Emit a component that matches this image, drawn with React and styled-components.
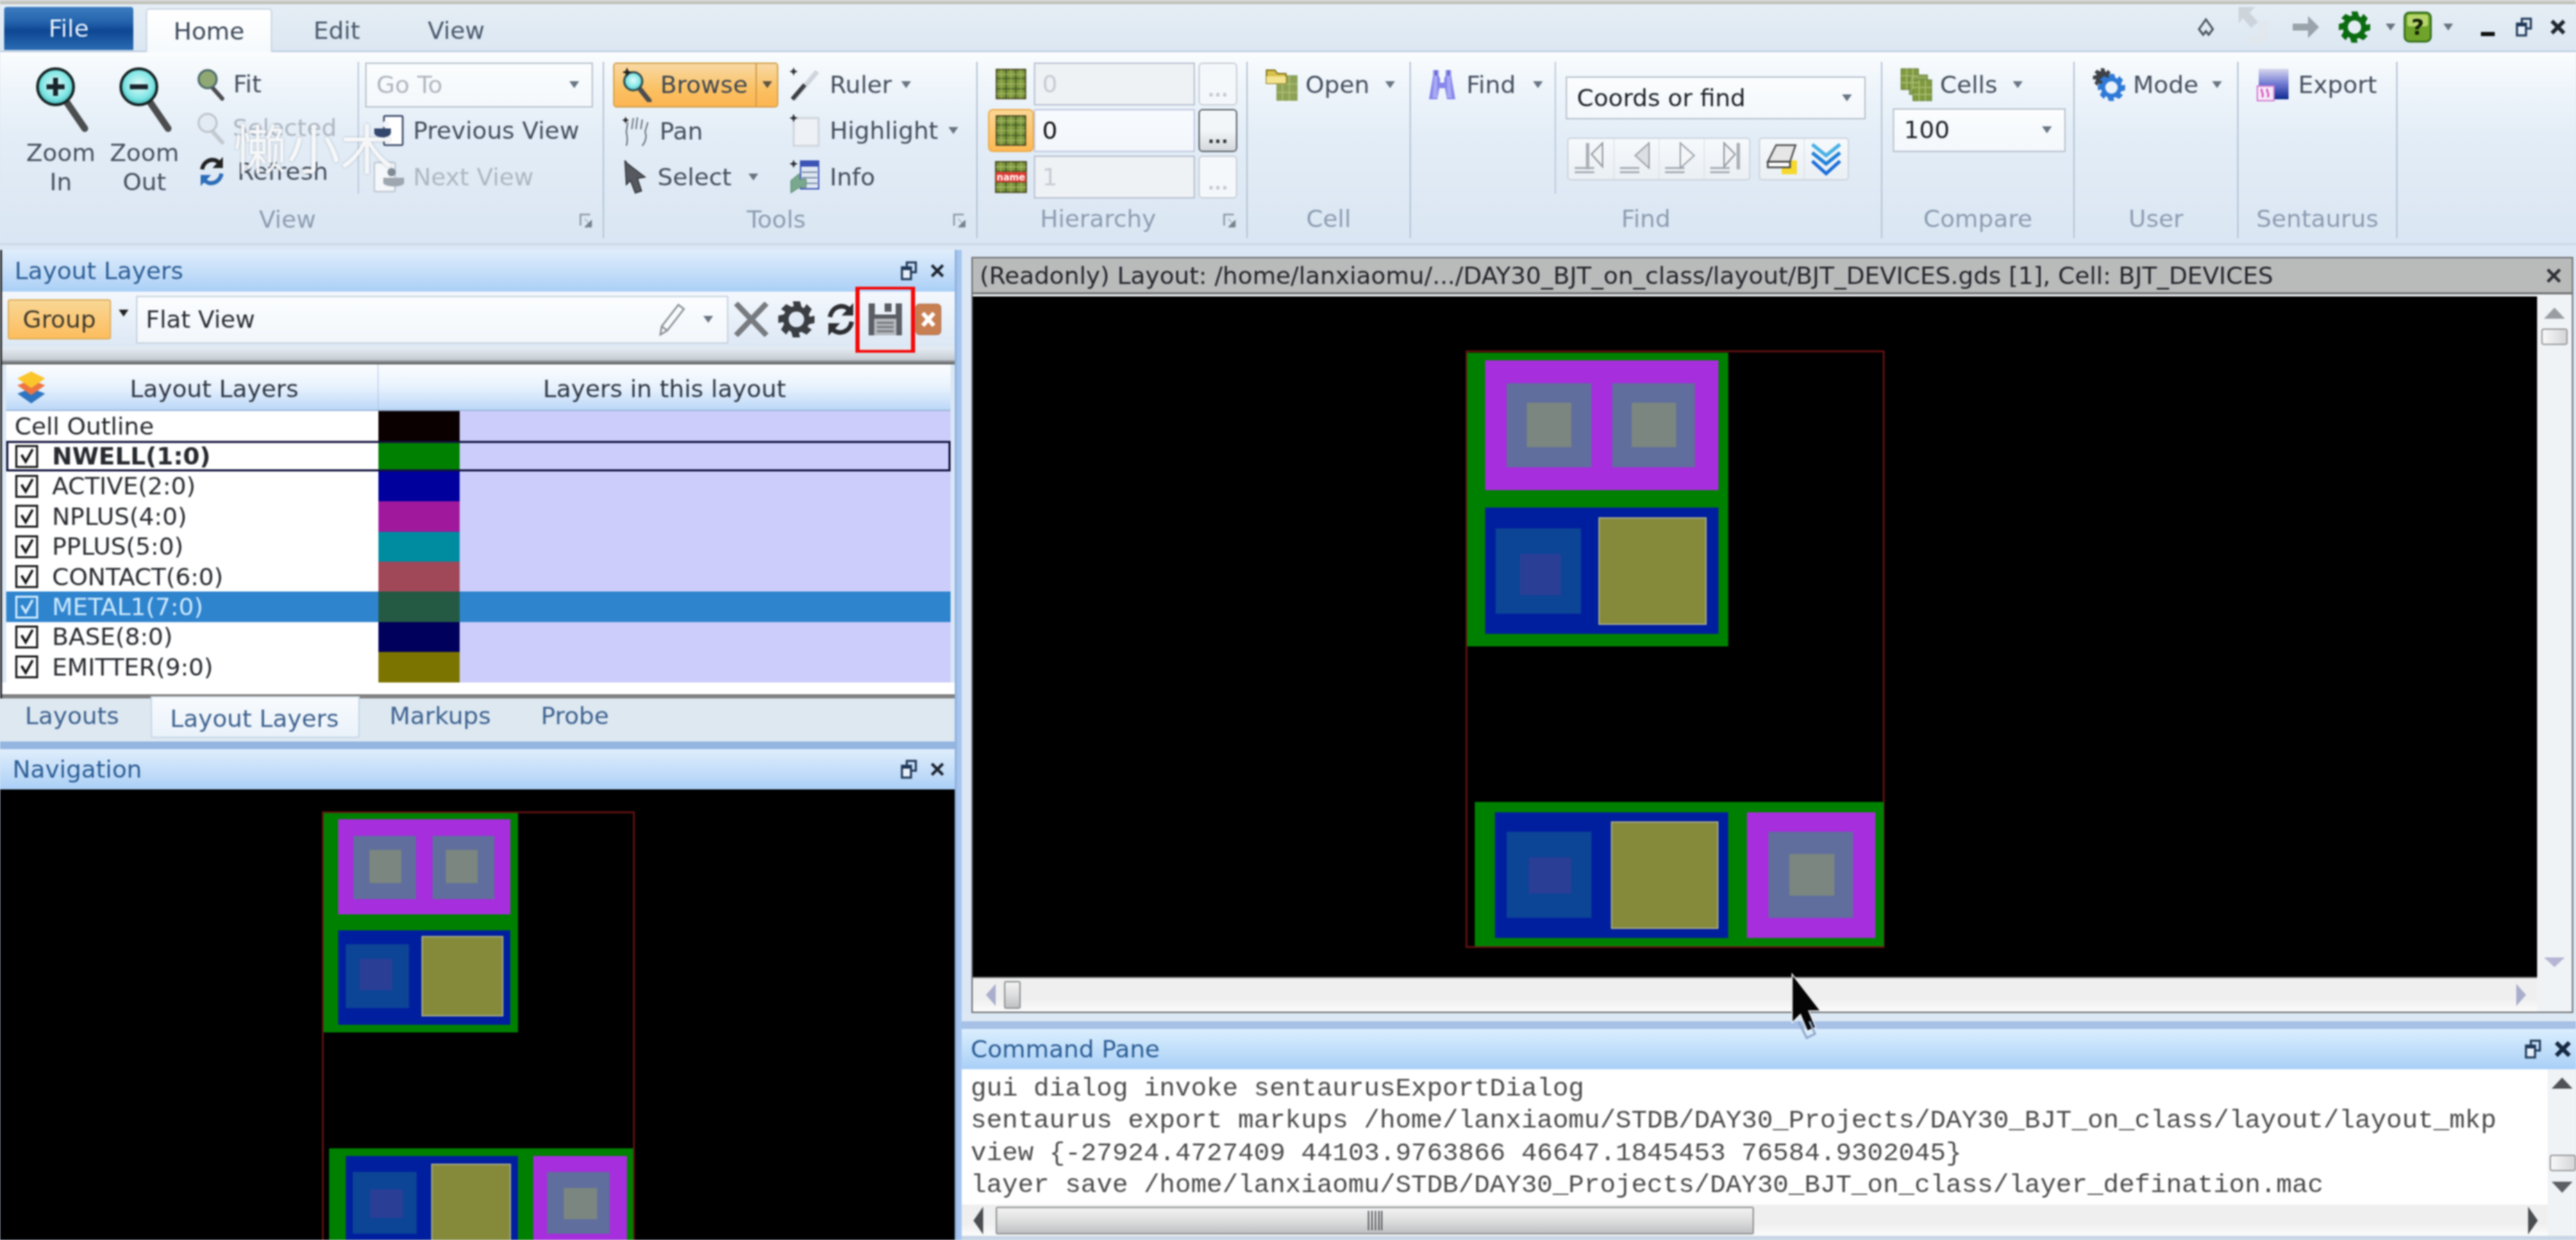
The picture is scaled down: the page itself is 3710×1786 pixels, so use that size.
import React from 'react';
import styled, { createGlobalStyle, css } from 'styled-components';

const Global = createGlobalStyle`
  html, body { margin: 0; padding: 0; background: #dbe7f4; }
  * { box-sizing: border-box; }
`;

const SANS = `"DejaVu Sans", "Liberation Sans", sans-serif`;

const Page = styled.div`
  position: relative;
  width: 3710px;
  height: 1786px;
  overflow: hidden;
  background: #dbe7f4;
  font-family: ${SANS};
  font-size: 34.6px;
  color: #3f4a59;
  filter: blur(0.8px);
  white-space: nowrap;
`;
const TopStrip = styled.div`height: 6px; background: linear-gradient(#d6d5cf, #b9bab6);`;
const TabRow = styled.div`
  height: 69px;
  display: flex;
  align-items: flex-start;
  padding-left: 6px;
  background: linear-gradient(#e6eef5, #dbe7f2);
  border-bottom: 2px solid #b8c9dc;
`;
const FileBtn = styled.div`
  width: 186px; height: 62px; margin-top: 4px;
  display: flex; align-items: center; justify-content: center;
  color: #e8f2fb;
  border-radius: 4px 4px 0 0;
  background: linear-gradient(#3d7cc0 0%, #2464ac 35%, #0e4692 55%, #2a6cb4 100%);
`;
const RibbonTab = styled.div`
  width: ${p => p.$w}px;
  height: 69px;
  display: flex; align-items: center; justify-content: center;
  color: #49586b;
  padding-top: 6px;
  ${p => p.$active && css`
    margin-left: 18px;
    margin-top: 6px;
    height: 63px;
    padding-top: 0;
    background: linear-gradient(#ffffff, #f6fafd);
    border: 2px solid #c8d6e4;
    border-bottom: none;
    border-radius: 5px 5px 0 0;
    color: #3c4858;
  `}
`;
const QuickBar = styled.div`
  margin-left: auto;
  height: 66px;
  display: grid;
  grid-template-columns: 54px 84px 66px 74px 30px 48px 40px 74px 30px 8px 52px;
  align-items: center;
  justify-items: center;
`;
const Ribbon = styled.div`
  height: 278px;
  display: flex;
  align-items: flex-start;
  padding-top: 14px;
  background: linear-gradient(#fbfdfe 0%, #f0f6fb 15%, #e3edf7 45%, #dae6f3 100%);
  border-bottom: 3px solid #cbd9e8;
`;
const Group = styled.div`
  position: relative;
  width: ${p => p.$w}px;
  height: 254px;
  display: flex;
  flex-direction: column;
  border-right: 2px solid #b4c3d4;
`;
const GroupBody = styled.div`
  height: 199px;
  display: flex;
  padding-left: ${p => p.$pad || 0}px;
`;
const GroupLabel = styled.div`
  height: 56px;
  line-height: 56px;
  text-align: center;
  color: #8c9cb0;
  padding-right: ${p => (p.$launcher ? 40 : 0)}px;
`;
const Launcher = styled.span`
  position: absolute;
  right: 14px;
  bottom: 14px;
  display: flex;
`;
const BigBtn = styled.div`
  width: ${p => p.$w}px;
  display: flex;
  flex-direction: column;
  align-items: center;
  padding-top: 6px;
  line-height: 42px;
  text-align: center;
  color: #454f5e;
`;
const BigIcon = styled.div`height: 104px; display: flex; justify-content: center; padding-left: 6px;`;
const Column = styled.div`
  width: ${p => p.$w}px;
  display: flex;
  flex-direction: column;
  margin-left: ${p => p.$ml || 0}px;
  ${p => p.$divider && css`
    height: 190px;
    border-right: 2px solid #bccadb;
  `}
`;
const Row = styled.div`
  height: 66.5px;
  display: flex;
  align-items: center;
  color: ${p => (p.$off ? '#aeb6c1' : '#434d5c')};
`;
const Slot = styled.span`
  width: ${p => p.$w}px;
  flex: none;
  display: flex;
  align-items: center;
  padding-left: ${p => p.$pl || 0}px;
`;
const Caret = styled.i`
  display: inline-block;
  flex: none;
  width: 0; height: 0;
  margin-left: ${p => p.$ml || 0}px;
  border-left: 7px solid transparent;
  border-right: 7px solid transparent;
  border-top: 10px solid ${p => p.$c || '#687482'};
`;
const ComboBox = styled.div`
  width: ${p => p.$w}px;
  height: ${p => p.$h}px;
  margin-top: ${p => p.$mt || 0}px;
  margin-left: ${p => p.$ml || 0}px;
  display: flex;
  align-items: center;
  justify-content: space-between;
  padding: 0 18px 0 ${p => p.$pl || 14}px;
  border: 2px solid #b9c2cd;
  background: linear-gradient(#fbfdfe, #f4f8fc);
  color: ${p => p.$c || '#1e2228'};
`;
const BrowseSplit = styled.div`
  height: 65px;
  width: 238px;
  margin-top: 1px;
  margin-bottom: 0.5px;
  display: flex;
  border-radius: 5px;
  border: 2px solid #d3a24e;
  background: linear-gradient(#f8d9a4, #fbc163 60%, #fdb552);
  color: #3e4650;
`;
const BrowseMain = styled.div`
  width: 205px;
  display: flex;
  align-items: center;
  padding-left: 12px;
  border-right: 2px solid #d39c49;
`;
const BrowseDrop = styled.div`flex: 1; display: flex; align-items: center; justify-content: center;`;
const HierRows = styled.div`
  display: flex;
  flex-direction: column;
  gap: 5px;
  margin-top: 1px;
`;
const HierRow = styled.div`
  display: grid;
  grid-template-columns: 66px 232px 56px;
  column-gap: 0;
  height: 62px;
`;
const HierIcon = styled.div`
  display: flex; align-items: center; justify-content: center;
  border-radius: 7px;
  ${p => p.$active && css`
    background: linear-gradient(#fbd793, #fdb954);
    border: 2px solid #e9ab4c;
  `}
`;
const HierInput = styled.div`
  display: flex; align-items: center;
  padding-left: 10px;
  border: 2px solid ${p => (p.$active ? '#c3c8e0' : '#b9c1d2')};
  background: ${p => (p.$active ? 'linear-gradient(#f8fbfe,#f3f6fb)' : '#eff2f4')};
  color: ${p => (p.$active ? '#111' : '#c6ccd4')};
`;
const DotsBtn = styled.div`
  margin-left: 5px;
  width: 56px;
  display: flex; align-items: flex-end; justify-content: center;
  border-radius: 6px;
  font-size: 26px;
  font-weight: bold;
  line-height: 28px;
  padding-bottom: 6px;
  border: 2px solid ${p => (p.$active ? '#585f68' : '#c9cfd7')};
  background: ${p => (p.$active ? 'linear-gradient(#f3f6f9 50%,#d4d8dc)' : '#f5f8fb')};
  color: ${p => (p.$active ? '#333' : '#c4cad2')};
`;
const ToolStrip = styled.div`
  margin-top: 26px;
  margin-left: 2px;
  display: flex;
  gap: 12px;
`;
const ToolSet = styled.div`
  display: flex;
  height: 62px;
  border: 2px solid #ccd4de;
  border-radius: 5px;
  background: linear-gradient(#f7fafc, #eaeff4);
`;
const ToolCell = styled.div`
  width: ${p => p.$w}px;
  display: flex; align-items: center; justify-content: center;
  & + & { border-left: 1px solid #d5dce4; }
`;
const Dock = styled.div`
  height: 1433px;
  display: flex;
  padding-top: 7px;
`;
const LeftCol = styled.div`
  width: 1378px;
  flex: none;
  display: flex;
  flex-direction: column;
  border-right: 3px solid #8fb3df;
`;
const LayersPanel = styled.div`
  display: flex;
  flex-direction: column;
  flex: none;
  border-left: 3px solid #2a2a2a;
`;
const DockTitle = styled.div`
  height: ${p => p.$h || 60}px;
  flex: none;
  display: flex;
  align-items: center;
  justify-content: space-between;
  padding: 0 ${p => p.$pr || 14}px 0 ${p => p.$pl || 18}px;
  background: linear-gradient(#dfeefc, #bcd9f8 70%, #a9cff7);
  color: #2c5d94;
`;
const TitleControls = styled.div`
  display: flex;
  gap: 18px;
  align-items: center;
`;
const LayerToolbar = styled.div`
  height: 80px;
  flex: none;
  display: flex;
  align-items: center;
  background: linear-gradient(#f4f8fd, #dce8f5);
`;
const GroupToggle = styled.div`
  width: 149px; height: 58px; margin-left: 8px;
  display: flex; align-items: center; justify-content: center;
  border: 2px solid #deb061;
  border-radius: 4px;
  background: linear-gradient(#f9d795, #fdbd5e);
  color: #3f3a2b;
`;
const GroupCaretCell = styled.div`
  width: 36px;
  display: flex;
  justify-content: center;
  margin-top: -18px;
`;
const ViewCombo = styled.div`
  width: 853px; height: 69px;
  display: flex; align-items: center;
  padding: 0 20px 0 12px;
  border: 2px solid #c8d2de;
  background: linear-gradient(#fbfdff, #f3f7fb);
  color: #2a2d33;
`;
const ViewComboText = styled.span`flex: 1;`;
const ToolIcon = styled.div`
  position: relative;
  width: ${p => p.$w}px;
  height: 80px;
  display: flex; align-items: center; justify-content: center;
`;
const RedBox = styled.div`
  position: absolute;
  left: -10px; top: -7px;
  width: 86px; height: 95px;
  border-style: solid;
  border-color: #f40808;
  border-width: 4px 6px;
`;
const GrayBand = styled.div`
  height: 25px; flex: none;
  background: linear-gradient(#e6edf4, #c8ced4 70%, #6c6f72 90%);
`;
const LayerTable = styled.div`
  margin-left: 6px;
  width: 1360px;
  flex: none;
  display: flex;
  flex-direction: column;
  background: #fff;
`;
const TableHead = styled.div`
  height: 67px;
  flex: none;
  display: grid;
  grid-template-columns: 536px 1fr;
  color: #2e3644;
  background: linear-gradient(#fcfeff, #e8f2fd 50%, #bcd8f8);
  border-bottom: 2px solid #9cb6d8;
`;
const HeadCell = styled.div`
  position: relative;
  display: flex; align-items: center; justify-content: center;
  padding-top: 4px;
  ${p => p.$first && css`border-right: 1px solid #a8c2e4; padding-left: 64px;`}
`;
const HeadLogo = styled.span`
  position: absolute; left: 14px; top: 10px; display: flex;
`;
const LayerRow = styled.div`
  position: relative;
  height: 43.4px;
  flex: none;
  display: grid;
  grid-template-columns: 536px 117px 1fr;
  color: ${p => (p.$sel ? '#cdeafe' : '#26292e')};
  font-weight: ${p => (p.$bold ? 700 : 400)};
`;
const LayerName = styled.div`
  display: flex; align-items: center;
  gap: 20px;
  padding-left: ${p => (p.$plain ? 12 : 13)}px;
  background: ${p => (p.$sel ? '#2f84ce' : '#fff')};
`;
const CheckBox = styled.span`
  flex: none;
  width: 33px; height: 33px;
  display: flex; align-items: center; justify-content: center;
  border: 3px solid ${p => (p.$sel ? '#cdeafe' : '#1c1c1c')};
  background: ${p => (p.$sel ? '#2f84ce' : '#fff')};
`;
const Swatch = styled.div`background: ${p => p.$c};`;
const LayerFill = styled.div`background: ${p => (p.$sel ? '#2f84ce' : '#cccdfb')};`;
const RowFrame = styled.div`
  position: absolute;
  inset: 0;
  border: 3px solid #12123e;
  pointer-events: none;
`;
const TableFoot = styled.div`
  height: 23px;
  flex: none;
  background: linear-gradient(#fff 70%, #fff 72%, #7a7a7a 76%, #8a8a8a);
`;
const PaneTabs = styled.div`
  height: 62px;
  flex: none;
  display: flex;
  align-items: flex-start;
  background: #dde8f1;
  color: #3e628f;
`;
const PaneTab = styled.div`
  width: ${p => p.$w}px;
  height: 50px;
  padding-left: ${p => p.$pl}px;
  line-height: 50px;
  ${p => p.$active && css`
    height: 60px;
    line-height: 60px;
    margin-top: -3px;
    background: linear-gradient(#f8fbfe, #eaf2fa);
    border: 2px solid #c7d6e6;
    border-top-color: #dfe8f1;
    border-radius: 0 0 4px 4px;
  `}
`;
const BlueBar = styled.div`height: 11px; flex: none; background: ${p => p.$c || '#94b5e0'};`;
const NavCanvas = styled.div`
  flex: 1;
  min-height: 0;
  background: #000;
  display: flex;
`;
const RightCol = styled.div`
  flex: 1;
  min-width: 0;
  display: flex;
  flex-direction: column;
  border-left: 7px solid #a5c5ee;
`;
const ViewFrame = styled.div`
  margin: 10px 4px 0 14px;
  height: 1089px;
  flex: none;
  display: flex;
  flex-direction: column;
  border: 2px solid #6d6f72;
  background: #f1f4f7;
`;
const FrameTitle = styled.div`
  height: 52px;
  flex: none;
  display: flex;
  align-items: center;
  justify-content: space-between;
  padding: 0 14px 0 10px;
  background: #b9baba;
  border-bottom: 3px solid #727476;
  color: #22262b;
`;
const FrameBody = styled.div`
  display: grid;
  grid-template-columns: 1fr 50px;
  flex: 1;
  min-height: 0;
  padding-top: 3px;
  background: #eef2f5;
`;
const CanvasBox = styled.div`background: #000; display: flex; border-bottom: 2px solid #888;`;
const VScroll = styled.div`
  display: flex;
  flex-direction: column;
  align-items: center;
  background: #f0f3f6;
  padding-top: ${p => p.$pt || 0}px;
  padding-bottom: ${p => p.$pb || 0}px;
`;
const VThumb = styled.div`
  width: ${p => p.$w || 38}px;
  height: ${p => p.$h || 24}px;
  margin-top: ${p => p.$mt || 0}px;
  margin-left: ${p => p.$ml || 0}px;
  margin-bottom: ${p => p.$mb || 0}px;
  flex: none;
  border: 2px solid #9a9c9e;
  border-radius: 4px;
  background: linear-gradient(90deg, #f8f8f8, #d4d6d8);
`;
const Spacer = styled.div`flex: 1;`;
const HScroll = styled.div`
  height: ${p => p.$h}px;
  display: flex;
  align-items: center;
  padding: 0 ${p => p.$pr}px 0 ${p => p.$pl}px;
  background: linear-gradient(#efefef 60%, #fbfbfb);
`;
const HThumb = styled.div`
  width: ${p => p.$w}px;
  height: ${p => p.$h}px;
  margin-left: ${p => p.$ml}px;
  display: flex; align-items: center; justify-content: center;
  border: 2px solid #8f9193;
  border-radius: 3px;
  background: linear-gradient(#f2f2f2, #e0e0e0 45%, #bfc1c3);
`;
const GapBand = styled.div`height: 12px; flex: none; background: #dce8f4;`;
const CommandTitle = styled(DockTitle)`
  background: linear-gradient(#dbeffe, #b8d9f9 70%, #a9cff8);
  color: #2c5d94;
`;
const CommandBody = styled.div`
  display: grid;
  grid-template-columns: 1fr 41px;
  flex: none;
  height: 240px;
  background: #fff;
`;
const CommandText = styled.pre`
  margin: 0;
  height: 195px;
  padding: 5px 0 0 13px;
  font-family: "Liberation Mono", "DejaVu Sans Mono", monospace;
  font-size: 37.75px;
  line-height: 46.3px;
  color: #4a4a4a;
  overflow: hidden;
`;
const CommandLeft = styled.div`display: flex; flex-direction: column; min-width: 0;`;
const BottomEdge = styled.div`height: 6px; flex: none; background: #c9d6e6;`;
const Watermark = styled.div`
  position: absolute;
  left: 336px; top: 166px;
  font-family: "Noto Sans CJK SC", sans-serif;
  font-weight: 400;
  font-size: 77px;
  line-height: 90px;
  color: rgba(255,255,255,0.9);
  text-shadow: 0 0 3px rgba(100,110,125,0.55);
  pointer-events: none;
`;
const Cursor = styled.svg`
  position: absolute;
  left: 2576px; top: 1401px;
  pointer-events: none;
`;

/* ---------- icons ---------- */
const gearPath = (cx, cy, ro, ri, n) => {
  const pts = [];
  for (let i = 0; i < n; i++) {
    const a = (i / n) * Math.PI * 2;
    const d = (Math.PI / n) * 0.5;
    [[a - d, ro], [a + d, ro], [a + d * 2, ri], [a + d * 3 , ri]].forEach(([t, r]) => {
      pts.push(`${(cx + Math.cos(t) * r).toFixed(1)} ${(cy + Math.sin(t) * r).toFixed(1)}`);
    });
  }
  return `M${pts.join('L')}Z`;
};
const Gear = ({ w, h, c, hole = 'transparent', holeR, r = 20, ri = 15, stroke }) => (
  <svg width={w} height={h} viewBox="0 0 48 48">
    <path d={gearPath(24, 24, r, ri, 8)} fill={c} />
    <circle cx="24" cy="24" r={holeR || r * 0.42} fill={hole} stroke={stroke} />
  </svg>
);
const GlassDefs = () => (
  <defs>
    <radialGradient id="glass" cx="50%" cy="45%" r="55%">
      <stop offset="0" stopColor="#e4fbfb" />
      <stop offset="0.7" stopColor="#7fe6e4" />
      <stop offset="1" stopColor="#3fb4b6" />
    </radialGradient>
  </defs>
);
const ZoomIcon = ({ sign }) => (
  <svg width="78" height="96" viewBox="0 0 78 96">
    <GlassDefs />
    <line x1="44" y1="52" x2="70" y2="90" stroke="#4b4d4e" strokeWidth="10" strokeLinecap="round" />
    <circle cx="28" cy="30" r="26" fill="url(#glass)" stroke="#172424" strokeWidth="4" />
    <rect x="15" y="26.5" width="26" height="7" fill="#18242a" />
    {sign === '+' && <rect x="24.5" y="17" width="7" height="26" fill="#18242a" />}
  </svg>
);
const SmallGlass = ({ fill = '#90a874', off }) => (
  <svg width="42" height="50" viewBox="0 0 42 50" opacity={off ? 0.35 : 1}>
    <line x1="20" y1="28" x2="36" y2="46" stroke={off ? '#888' : '#4a4c50'} strokeWidth="6" strokeLinecap="round" />
    <circle cx="15" cy="18" r="13" fill={fill} stroke={off ? '#777' : '#4d6a6c'} strokeWidth="3" />
  </svg>
);
const RefreshIcon = ({ size = 36, h = 50, c1 = '#2c6cb8', c2 = '#222' }) => (
  <svg width={size} height={h} viewBox="0 0 36 50">
    <path d="M4 22 A15 17 0 0 1 30 14" fill="none" stroke={c2} strokeWidth="6" />
    <path d="M34 4v16H19z" fill={c2} />
    <path d="M32 28 A15 17 0 0 1 6 36" fill="none" stroke={c1} strokeWidth="6" />
    <path d="M2 46V30h15z" fill={c1} />
  </svg>
);
const PrevViewIcon = () => (
  <svg width="44" height="46" viewBox="0 0 44 46">
    <rect x="15" y="2" width="27" height="42" rx="2" fill="#fff" stroke="#3b4a6a" strokeWidth="2.5" />
    <path d="M1 20h24v6c0 9-24 9-24 0z" fill="#34486e" />
    <circle cx="18" cy="14" r="5" fill="#f2f6fa" />
  </svg>
);
const NextViewIcon = () => (
  <svg width="46" height="46" viewBox="0 0 46 46">
    <rect x="1" y="2" width="30" height="42" rx="2" fill="#f5f8fb" stroke="#c2cad4" strokeWidth="2.5" />
    <path d="M14 24h30v8c-3 6-26 6-30 0z" fill="#9ea7b0" />
    <circle cx="26" cy="16" r="6" fill="#7f8a94" />
  </svg>
);
const BrowseGlass = () => (
  <svg width="42" height="50" viewBox="0 0 42 50">
    <GlassDefs />
    <line x1="22" y1="28" x2="38" y2="48" stroke="#4a4c50" strokeWidth="7" strokeLinecap="round" />
    <circle cx="15" cy="20" r="13" fill="url(#glass)" stroke="#304c50" strokeWidth="3" />
    <path d="M6 0l2 5 5 2-5 2-2 5-2-5-5-2 5-2z" fill="#222" />
  </svg>
);
const PanIcon = () => (
  <svg width="42" height="46" viewBox="0 0 42 46" fill="none" stroke="#66707c" strokeWidth="2">
    <path d="M6 44c3-8 1-14 0-20l2-14M14 20l2-16M20 20l2-17M27 20l2-14M33 24l4-14M33 24c3 6 1 14-4 20" />
    <path d="M5 2l1.600 3.500 3.400 1.500-3.400 1.500-1.600 3.500-1.600-3.500-3.400-1.500 3.400-1.500z" fill="#222" stroke="none" />
  </svg>
);
const SelectIcon = () => (
  <svg width="38" height="48" viewBox="0 0 38 48">
    <path d="M4 0l3 4 26 20-11 2 6 18-9 3-7-18-6 6z" fill="#565a60" stroke="#2b2d30" strokeWidth="1.500" />
  </svg>
);
const Star = () => <path d="M6 0l1.800 4.200 4.200 1.800-4.200 1.800-1.800 4.200-1.800-4.200-4.200-1.800 4.200-1.800z" fill="#2c2e33" />;
const RulerIcon = () => (
  <svg width="44" height="50" viewBox="0 0 44 50">
    <line x1="6" y1="46" x2="40" y2="6" stroke="#cfd5dc" strokeWidth="7" />
    <line x1="4" y1="46" x2="22" y2="25" stroke="#3c3e42" strokeWidth="6" />
    <Star />
  </svg>
);
const HighlightIcon = () => (
  <svg width="44" height="48" viewBox="0 0 44 48">
    <rect x="6" y="6" width="36" height="40" fill="#eef2f6" stroke="#d0d6dd" strokeWidth="3" />
    <Star />
  </svg>
);
const InfoIcon = () => (
  <svg width="44" height="50" viewBox="0 0 44 50">
    <rect x="16" y="2" width="26" height="40" fill="#dfe7f2" stroke="#3c54b6" strokeWidth="2" />
    <rect x="16" y="2" width="26" height="8" fill="#3c54b6" />
    <path d="M18 18h22M18 26h22M18 34h22" stroke="#7a8ea8" strokeWidth="2" />
    <path d="M2 48V30l12-10v8h10v12H14z" fill="#7aa88e" stroke="#4d8068" />
    <Star />
  </svg>
);
const Mesh = ({ h = 42 }) => (
  <>
    <rect x="1" y="1" width="42" height={h} fill="#7f9a3e" stroke="#4f4f24" strokeWidth="2.500" />
    <path d={`M15 1v${h}M29 1v${h}M1 14h42M1 29h42`} stroke="#3e5526" strokeWidth="1.600" />
    <path d={`M8 1v${h}M22 1v${h}M36 1v${h}M1 8h42M1 22h42M1 36h42`} stroke="#b1bf72" strokeWidth="1" />
  </>
);
const GridIcon = () => <svg width="44" height="44" viewBox="0 0 44 44"><Mesh /></svg>;
const GridNameIcon = () => (
  <svg width="46" height="46" viewBox="0 0 44 44">
    <Mesh />
    <rect x="1" y="15" width="42" height="14" fill="#dd3a34" />
    <text x="22" y="27" textAnchor="middle" fontSize="14" fontWeight="700" fill="#fff" fontFamily="DejaVu Sans Condensed, DejaVu Sans">name</text>
  </svg>
);
const OpenIcon = () => (
  <svg width="46" height="46" viewBox="0 0 46 46">
    <rect x="16" y="10" width="29" height="36" fill="#8ea255" stroke="#71913a" />
    <path d="M24 10v36M34 10v36M16 22h29M16 34h29" stroke="#b2c17a" strokeWidth="1.500" />
    <path d="M1 2h12l4 5h12v14H1z" fill="#d7c14e" stroke="#837218" strokeWidth="2" />
    <path d="M1 11h28v10H1z" fill="#f5e48f" />
  </svg>
);
const BinocularsIcon = () => (
  <svg width="40" height="46" viewBox="0 0 40 46">
    <path d="M7 2h8v8l2 4v6h6v-6l2-4V2h8v8l6 34H27l-3-16h-8l-3 16H1l6-34z" fill="#8686ec" />
    <path d="M9 2h4v40H6zM27 2h4l3 40h-7z" fill="#a8a8f4" />
    <path d="M10 2h2v8h-2zM28 2h2v8h-2z" fill="#4848b4" />
  </svg>
);
const NavIcon = ({ kind }) => (
  <svg width="56" height="54" viewBox="0 0 56 54">
    <path d="M4 40h28M4 46h28" stroke="#9ca4ac" strokeWidth="2.500" />
    {kind === 'first' && <><rect x="20" y="4" width="5" height="38" fill="#aab0b7" /><path d="M44 4v34L28 20z" fill="#f1f3f5" stroke="#8f969e" strokeWidth="2" /></>}
    {kind === 'prev' && <path d="M46 4v36L26 22z" fill="#dce0e4" stroke="#9aa1a8" strokeWidth="2" />}
    {kind === 'next' && <path d="M26 4v36l20-18z" fill="#f5f6f7" stroke="#9aa1a8" strokeWidth="2" />}
    {kind === 'last' && <><path d="M24 4v34l16-18z" fill="#f1f3f5" stroke="#8f969e" strokeWidth="2" /><rect x="42" y="4" width="5" height="38" fill="#aab0b7" /></>}
  </svg>
);
const EraserIcon = () => (
  <svg width="46" height="48" viewBox="0 0 46 48">
    <rect x="22" y="26" width="22" height="20" fill="#f6d92c" />
    <path d="M14 4h28l-8 24H2z" fill="#e6e6e6" stroke="#555" strokeWidth="2.500" />
    <path d="M2 28h32v8H2z" fill="#fff" stroke="#444" strokeWidth="2.500" />
  </svg>
);
const ChevronsIcon = () => (
  <svg width="46" height="50" viewBox="0 0 46 50" fill="none" strokeWidth="5">
    <path d="M3 4l20 16L43 4" stroke="#4ab0e4" />
    <path d="M3 16l20 16 20-16" stroke="#2080d8" />
    <path d="M3 28l20 18 20-18" stroke="#1c6ed8" />
  </svg>
);
const CellsIcon = () => (
  <svg width="46" height="48" viewBox="0 0 46 48">
    <rect x="1" y="1" width="25" height="30" fill="#7f9a3e" stroke="#5c7030" />
    <rect x="13" y="10" width="26" height="28" fill="#8da555" stroke="#5c7030" />
    <rect x="18" y="17" width="27" height="30" fill="#7f9a3e" stroke="#5a7a38" />
    <path d="M9 1v30M18 1v30M1 11h25M1 21h25M27 17v30M36 17v30M18 28h27M18 38h27" stroke="#b2c17a" strokeWidth="1.500" />
  </svg>
);
const ModeIcon = () => (
  <svg width="48" height="48" viewBox="0 0 48 48">
    <path d={gearPath(15, 14, 14, 10, 8)} fill="#3e4248" />
    <path d={gearPath(28, 28, 20, 15, 8)} fill="#2f7ad8" />
    <circle cx="28" cy="28" r="9" fill="#eaf2fb" />
  </svg>
);
const ExportIcon = () => (
  <svg width="46" height="48" viewBox="0 0 46 48">
    <defs>
      <linearGradient id="exp" x1="0" y1="0" x2="0" y2="1">
        <stop offset="0" stopColor="#d9d9ee" />
        <stop offset="0.5" stopColor="#6f78d2" />
        <stop offset="1" stopColor="#0e2a90" />
      </linearGradient>
    </defs>
    <rect x="3" y="1" width="43" height="44" fill="url(#exp)" />
    <rect x="1" y="26" width="24" height="21" fill="#f4eaf6" stroke="#d67bd6" strokeWidth="2" />
    <path d="M8 30c-4 3 4 6 0 12M16 30c-4 3 4 6 0 12" stroke="#d64bc0" strokeWidth="2.500" fill="none" />
  </svg>
);
const LauncherIcon = () => (
  <svg width="20" height="22" viewBox="0 0 20 22">
    <path d="M2 18V2h14" fill="none" stroke="#909aa6" strokeWidth="2.500" />
    <path d="M8 8l9 10M18 10v10H8z" fill="#77818e" stroke="#77818e" strokeWidth="1" />
  </svg>
);
const FloatIcon = () => (
  <svg width="24" height="28" viewBox="0 0 24 28" fill="none" stroke="#1f3858" strokeWidth="3">
    <rect x="9" y="2" width="13" height="14" />
    <rect x="2" y="9" width="13" height="17" fill="#e8f0fa" />
    <path d="M2 11h13" strokeWidth="4" />
  </svg>
);
const CloseX = ({ c = '#1d2530', s = 22, w = 4 }) => (
  <svg width={s} height={s} viewBox="0 0 22 22">
    <path d="M3 3l16 16M19 3L3 19" stroke={c} strokeWidth={w} />
  </svg>
);
const QuickUp = () => (
  <svg width="28" height="30" viewBox="0 0 28 30" fill="none" stroke="#4c5660" strokeWidth="3">
    <path d="M4 18L14 4l10 14-6 8-4-5-4 5z" />
  </svg>
);
const BackFaint = () => (
  <svg width="48" height="66" viewBox="0 0 48 66" fill="#c6ccd2" opacity="0.75">
    <path d="M2 4h24L18 12l12 14-10 8L8 20l-6 8z" />
    <path d="M44 24v24L26 60 16 50l14-8V24z" fill="#e3e8ec" />
  </svg>
);
const ForwardFaint = () => (
  <svg width="42" height="38" viewBox="0 0 42 38">
    <path d="M2 14h22V3l16 16-16 16V24H2z" fill="#9aa2aa" />
  </svg>
);
const HelpIcon = () => (
  <svg width="42" height="46" viewBox="0 0 42 46">
    <rect x="2" y="2" width="38" height="42" rx="7" fill="#6fa32a" stroke="#2f6a1a" strokeWidth="2.500" />
    <rect x="6" y="5" width="30" height="17" rx="4" fill="#b6d66c" />
    <text x="21" y="34" textAnchor="middle" fontSize="32" fontWeight="700" fill="#152008" fontFamily="DejaVu Sans">?</text>
  </svg>
);
const MinimizeIcon = () => <svg width="22" height="34" viewBox="0 0 22 34"><rect x="1" y="24" width="20" height="6" fill="#111" /></svg>;
const PencilIcon = () => (
  <svg width="46" height="48" viewBox="0 0 46 48" fill="none" stroke="#8c9196" strokeWidth="2.500">
    <path d="M8 34L32 3l8 6-24 31-10 6z" fill="#f8fafc" />
    <path d="M8 34l8 6" />
  </svg>
);
const BigX = () => (
  <svg width="52" height="50" viewBox="0 0 52 50"><path d="M4 2l44 46M48 2L4 48" stroke="#777b7f" strokeWidth="8" /></svg>
);
const SaveIcon = () => (
  <svg width="54" height="52" viewBox="0 0 54 52">
    <path d="M3 3h9v16h30V3h9v46H3z" fill="#5b5f65" />
    <rect x="11" y="25" width="32" height="24" fill="#b6babf" />
    <path d="M15 31h24M15 37h24M15 43h24" stroke="#777b80" strokeWidth="3" />
    <rect x="26" y="3" width="10" height="12" fill="#5b5f65" />
  </svg>
);
const OrangeClose = () => (
  <svg width="38" height="46" viewBox="0 0 38 46">
    <rect x="1" y="1" width="36" height="44" rx="5" fill="#c87f52" stroke="#a86238" />
    <path d="M11 14l16 18M27 14L11 32" stroke="#fff" strokeWidth="6" />
  </svg>
);
const LayersLogo = () => (
  <svg width="44" height="46" viewBox="0 0 44 46">
    <path d="M22 24l20 8-20 14L2 32z" fill="#2f74c0" />
    <path d="M22 12l20 8-20 14L2 20z" fill="#ee7440" />
    <path d="M22 0l20 10-20 14L2 10z" fill="#fbc52c" />
  </svg>
);
const CheckMark = ({ c }) => (
  <svg width="22" height="24" viewBox="0 0 22 24"><path d="M3 10l6 10L19 2" fill="none" stroke={c} strokeWidth="3.500" /></svg>
);
const Arrow = ({ dir, c = '#a9aecd', s = 32, l = 14 }) => {
  const paths = {
    up: `M0 ${l}L${s / 2} 0L${s} ${l}Z`,
    down: `M0 0L${s} 0L${s / 2} ${l}Z`,
    left: `M${l} 0V${s}L0 ${s / 2}Z`,
    right: `M0 0V${s}L${l} ${s / 2}Z`,
  };
  const vertical = dir === 'up' || dir === 'down';
  const w = vertical ? s : l;
  const h = vertical ? l : s;
  return <svg width={w} height={h} viewBox={`0 0 ${w} ${h}`} style={{ flex: 'none' }}><path d={paths[dir]} fill={c} /></svg>;
};

/* ---------- layout drawing ---------- */
const P = {
  green: '#008000', purple: '#a62edc', tap: '#5f6e9c', tapIn: '#7b8680',
  blue: '#001f9e', bsq: '#0c4496', bin: '#2b3e96', olive: '#858a3a',
};
const mainRects = [
  [2113, 508, 2489, 931, P.green], [2139, 519, 2475, 706, P.purple],
  [2170, 552, 2292, 673, P.tap], [2322, 552, 2441, 673, P.tap],
  [2199, 580, 2263, 644, P.tapIn], [2350, 580, 2414, 644, P.tapIn],
  [2139, 731, 2475, 913, P.blue], [2154, 761, 2277, 884, P.bsq], [2189, 798, 2248, 857, P.bin],
  [2303, 746, 2457, 899, P.olive],
  [2124, 1155, 2713, 1363, P.green], [2153, 1170, 2489, 1351, P.blue],
  [2170, 1198, 2292, 1322, P.bsq], [2202, 1235, 2263, 1287, P.bin], [2321, 1184, 2474, 1337, P.olive],
  [2516, 1170, 2701, 1351, P.purple], [2547, 1198, 2669, 1322, P.tap], [2577, 1230, 2642, 1290, P.tapIn],
];
const navRects = [
  [466, 1171, 746, 1487, P.green], [487, 1180, 735, 1317, P.purple],
  [509, 1204, 599, 1295, P.tap], [623, 1204, 712, 1295, P.tap],
  [532, 1224, 578, 1272, P.tapIn], [642, 1224, 688, 1272, P.tapIn],
  [487, 1340, 735, 1476, P.blue], [498, 1360, 589, 1452, P.bsq], [518, 1381, 565, 1426, P.bin],
  [608, 1349, 724, 1463, P.olive],
  [474, 1654, 912, 1810, P.green], [498, 1665, 746, 1800, P.blue],
  [508, 1688, 600, 1777, P.bsq], [533, 1713, 580, 1754, P.bin], [622, 1677, 735, 1790, P.olive],
  [768, 1665, 903, 1800, P.purple], [788, 1688, 878, 1777, P.tap], [812, 1711, 860, 1756, P.tapIn],
];
const LayoutDrawing = ({ box, rects, outline, w, h }) => (
  <svg width={w} height={h} viewBox={box} style={{ display: 'block' }}>
    <rect {...outline} fill="none" stroke="#6b1212" strokeWidth="2.500" />
    {rects.map(([x1, y1, x2, y2, c], i) => (
      <rect key={i} x={x1} y={y1} width={x2 - x1} height={y2 - y1} fill={c}
        stroke={c === P.olive ? '#a6a88a' : 'none'} strokeWidth={c === P.olive ? 2 : 0} />
    ))}
  </svg>
);

const layers = [
  { n: 'Cell Outline', c: '#0a0000', plain: true },
  { n: 'NWELL(1:0)', c: '#008000', bold: true },
  { n: 'ACTIVE(2:0)', c: '#00009c' },
  { n: 'NPLUS(4:0)', c: '#a0189c' },
  { n: 'PPLUS(5:0)', c: '#008ca0' },
  { n: 'CONTACT(6:0)', c: '#a04858' },
  { n: 'METAL1(7:0)', c: '#245a43', sel: true },
  { n: 'BASE(8:0)', c: '#00005c' },
  { n: 'EMITTER(9:0)', c: '#7c7400' },
];

const commandLines = `gui dialog invoke sentaurusExportDialog
sentaurus export markups /home/lanxiaomu/STDB/DAY30_Projects/DAY30_BJT_on_class/layout/layout_mkp
view {-27924.4727409 44103.9763866 46647.1845453 76584.9302045}
layer save /home/lanxiaomu/STDB/DAY30_Projects/DAY30_BJT_on_class/layer_defination.mac`;

export default function App() {
  return (
    <Page>
      <Global />
      <TopStrip />
      <TabRow>
        <FileBtn>File</FileBtn>
        <RibbonTab $active $w={182}>Home</RibbonTab>
        <RibbonTab $w={186}>Edit</RibbonTab>
        <RibbonTab $w={158}>View</RibbonTab>
        <QuickBar>
          <QuickUp />
          <BackFaint />
          <ForwardFaint />
          <Gear w={50} h={48} c="#0b6b10" hole="#e4edf5" r={23} ri={17} />
          <Caret $c="#6a7480" />
          <HelpIcon />
          <Caret $c="#6a7480" />
          <MinimizeIcon />
          <FloatIcon />
          <span />
          <CloseX c="#20262e" s={24} w={5} />
        </QuickBar>
      </TabRow>

      <Ribbon>
        <Group $w={870}>
          <GroupBody $pad={27}>
            <BigBtn $w={121}><BigIcon><ZoomIcon sign="+" /></BigIcon>Zoom<br />In</BigBtn>
            <BigBtn $w={120}><BigIcon><ZoomIcon sign="-" /></BigIcon>Zoom<br />Out</BigBtn>
            <Column $w={249} $divider>
              <Row><Slot $w={68} $pl={16}><SmallGlass /></Slot>Fit</Row>
              <Row $off><Slot $w={67} $pl={16}><SmallGlass off fill="#dde3ea" /></Slot>Selected</Row>
              <Row><Slot $w={74} $pl={19}><RefreshIcon /></Slot>Refresh</Row>
            </Column>
            <Column $w={328} $ml={9}>
              <Row><ComboBox $w={328} $h={65} $c="#b0b7c0"><span>Go To</span><Caret /></ComboBox></Row>
              <Row><Slot $w={69} $pl={12}><PrevViewIcon /></Slot>Previous View</Row>
              <Row $off><Slot $w={69} $pl={12}><NextViewIcon /></Slot>Next View</Row>
            </Column>
          </GroupBody>
          <GroupLabel $launcher>View</GroupLabel>
          <Launcher><LauncherIcon /></Launcher>
        </Group>

        <Group $w={538}>
          <GroupBody $pad={13}>
            <Column $w={238}>
              <BrowseSplit>
                <BrowseMain><BrowseGlass /><Slot $w={12} />Browse</BrowseMain>
                <BrowseDrop><Caret $c="#5c5240" /></BrowseDrop>
              </BrowseSplit>
              <Row><Slot $w={67} $pl={13}><PanIcon /></Slot>Pan</Row>
              <Row><Slot $w={64} $pl={13}><SelectIcon /></Slot>Select<Caret $ml={24} /></Row>
            </Column>
            <Column $w={270} $ml={16}>
              <Row><Slot $w={58}><RulerIcon /></Slot>Ruler<Caret $ml={14} /></Row>
              <Row><Slot $w={58}><HighlightIcon /></Slot>Highlight<Caret $ml={15} /></Row>
              <Row><Slot $w={58}><InfoIcon /></Slot>Info</Row>
            </Column>
          </GroupBody>
          <GroupLabel $launcher>Tools</GroupLabel>
          <Launcher><LauncherIcon /></Launcher>
        </Group>

        <Group $w={389}>
          <GroupBody $pad={15}>
            <HierRows>
              <HierRow><HierIcon><GridIcon /></HierIcon><HierInput>0</HierInput><DotsBtn>...</DotsBtn></HierRow>
              <HierRow><HierIcon $active><GridIcon /></HierIcon><HierInput $active>0</HierInput><DotsBtn $active>...</DotsBtn></HierRow>
              <HierRow><HierIcon><GridNameIcon /></HierIcon><HierInput>1</HierInput><DotsBtn>...</DotsBtn></HierRow>
            </HierRows>
          </GroupBody>
          <GroupLabel $launcher>Hierarchy</GroupLabel>
          <Launcher><LauncherIcon /></Launcher>
        </Group>

        <Group $w={235}>
          <GroupBody $pad={26}>
            <Column $w={200}>
              <Row><Slot $w={57}><OpenIcon /></Slot>Open<Caret $ml={23} /></Row>
            </Column>
          </GroupBody>
          <GroupLabel>Cell</GroupLabel>
        </Group>

        <Group $w={679}>
          <GroupBody $pad={25}>
            <Column $w={184} $divider>
              <Row><Slot $w={55}><BinocularsIcon /></Slot>Find<Caret $ml={25} /></Row>
            </Column>
            <Column $w={432} $ml={14}>
              <ComboBox $w={432} $h={62} $mt={21}><span>Coords or find</span><Caret /></ComboBox>
              <ToolStrip>
                <ToolSet>
                  <ToolCell $w={65}><NavIcon kind="first" /></ToolCell>
                  <ToolCell $w={65}><NavIcon kind="prev" /></ToolCell>
                  <ToolCell $w={65}><NavIcon kind="next" /></ToolCell>
                  <ToolCell $w={65}><NavIcon kind="last" /></ToolCell>
                </ToolSet>
                <ToolSet>
                  <ToolCell $w={63}><EraserIcon /></ToolCell>
                  <ToolCell $w={63}><ChevronsIcon /></ToolCell>
                </ToolSet>
              </ToolStrip>
            </Column>
          </GroupBody>
          <GroupLabel>Find</GroupLabel>
        </Group>

        <Group $w={277}>
          <GroupBody $pad={15}>
            <Column $w={249}>
              <Row><Slot $w={68} $pl={11}><CellsIcon /></Slot>Cells<Caret $ml={22} /></Row>
              <ComboBox $w={249} $h={63}><span>100</span><Caret /></ComboBox>
            </Column>
          </GroupBody>
          <GroupLabel>Compare</GroupLabel>
        </Group>

        <Group $w={236}>
          <GroupBody $pad={25}>
            <Column $w={200}>
              <Row><Slot $w={59}><ModeIcon /></Slot>Mode<Caret $ml={20} /></Row>
            </Column>
          </GroupBody>
          <GroupLabel>User</GroupLabel>
        </Group>

        <Group $w={229}>
          <GroupBody $pad={26}>
            <Column $w={190}>
              <Row><Slot $w={60}><ExportIcon /></Slot>Export</Row>
            </Column>
          </GroupBody>
          <GroupLabel>Sentaurus</GroupLabel>
        </Group>
      </Ribbon>

      <Dock>
        <LeftCol>
          <LayersPanel>
            <DockTitle>
              Layout Layers
              <TitleControls><FloatIcon /><CloseX /></TitleControls>
            </DockTitle>
            <LayerToolbar>
              <GroupToggle>Group</GroupToggle>
              <GroupCaretCell><Caret $c="#222" /></GroupCaretCell>
              <ViewCombo>
                <ViewComboText>Flat View</ViewComboText>
                <PencilIcon />
                <Caret $ml={22} />
              </ViewCombo>
              <ToolIcon $w={66}><BigX /></ToolIcon>
              <ToolIcon $w={64}><Gear w={58} h={58} c="#3a3d42" hole="#dfe9f5" r={22} ri={16} /></ToolIcon>
              <ToolIcon $w={63}><RefreshIcon size={56} h={56} c1="#2c2e32" c2="#2c2e32" /></ToolIcon>
              <ToolIcon $w={66}><SaveIcon /><RedBox /></ToolIcon>
              <ToolIcon $w={58}><OrangeClose /></ToolIcon>
            </LayerToolbar>
            <GrayBand />
            <LayerTable>
              <TableHead>
                <HeadCell $first><HeadLogo><LayersLogo /></HeadLogo>Layout Layers</HeadCell>
                <HeadCell>Layers in this layout</HeadCell>
              </TableHead>
              {layers.map(l => (
                <LayerRow key={l.n} $sel={l.sel} $bold={l.bold}>
                  <LayerName $sel={l.sel} $plain={l.plain}>
                    {!l.plain && <CheckBox $sel={l.sel}><CheckMark c={l.sel ? '#cdeafe' : '#111'} /></CheckBox>}
                    {l.n}
                  </LayerName>
                  <Swatch $c={l.c} />
                  <LayerFill $sel={l.sel} />
                  {l.bold && <RowFrame />}
                </LayerRow>
              ))}
            </LayerTable>
            <TableFoot />
          </LayersPanel>
          <PaneTabs>
            <PaneTab $w={217} $pl={36}>Layouts</PaneTab>
            <PaneTab $active $w={301} $pl={26}>Layout Layers</PaneTab>
            <PaneTab $w={261} $pl={43}>Markups</PaneTab>
            <PaneTab $w={200} $pl={0}>Probe</PaneTab>
          </PaneTabs>
          <BlueBar />
          <DockTitle $h={58}>
            Navigation
            <TitleControls><FloatIcon /><CloseX /></TitleControls>
          </DockTitle>
          <NavCanvas>
            <LayoutDrawing
              w={1375} h={649} box="0 1137 1375 649"
              rects={navRects}
              outline={{ x: 465, y: 1170, width: 448, height: 700 }}
            />
          </NavCanvas>
        </LeftCol>

        <RightCol>
          <ViewFrame>
            <FrameTitle>
              (Readonly) Layout: /home/lanxiaomu/.../DAY30_BJT_on_class/layout/BJT_DEVICES.gds [1], Cell: BJT_DEVICES
              <CloseX c="#2d3034" s={24} w={4} />
            </FrameTitle>
            <FrameBody>
              <CanvasBox>
                <LayoutDrawing
                  w={2253} h={980} box="1401 427 2253 980"
                  rects={mainRects}
                  outline={{ x: 2112, y: 506, width: 601, height: 858 }}
                />
              </CanvasBox>
              <VScroll $pt={16} $pb={16}>
                <Arrow dir="up" c="#9a9ea2" s={30} l={16} />
                <VThumb $mt={14} />
                <Spacer />
                <Arrow dir="down" c="#b4b6d4" s={30} l={14} />
              </VScroll>
              <HScroll $h={48} $pl={19} $pr={16}>
                <Arrow dir="left" />
                <HThumb $w={24} $h={40} $ml={12} />
                <Spacer />
                <Arrow dir="right" />
              </HScroll>
              <VScroll />
            </FrameBody>
          </ViewFrame>
          <GapBand />
          <BlueBar $c="#a6c0e6" />
          <CommandTitle $h={58} $pl={13} $pr={6}>
            Command Pane
            <TitleControls><FloatIcon /><CloseX c="#152840" s={26} w={5} /></TitleControls>
          </CommandTitle>
          <CommandBody>
            <CommandLeft>
              <CommandText>{commandLines}</CommandText>
              <HScroll $h={45} $pl={17} $pr={14}>
                <Arrow dir="left" c="#4a4d50" s={40} l={14} />
                <HThumb $w={1092} $h={40} $ml={18}>
                  <svg width="24" height="28" viewBox="0 0 24 28">
                    <path d="M3 0v28M8 0v28M13 0v28M18 0v28M22 0v28" stroke="#55585c" strokeWidth="2" />
                  </svg>
                </HThumb>
                <Spacer />
                <Arrow dir="right" c="#4a4d50" s={40} l={14} />
              </HScroll>
            </CommandLeft>
            <VScroll $pt={12}>
              <Arrow dir="up" c="#4f5256" s={30} l={16} />
              <VThumb $w={38} $h={24} $ml={3} $mt={95} $mb={15} />
              <Arrow dir="down" c="#5c6064" s={30} l={16} />
            </VScroll>
          </CommandBody>
          <BottomEdge />
        </RightCol>
      </Dock>

      <Watermark>懒小木</Watermark>
      <Cursor width="50" height="98" viewBox="0 0 50 98">
        <path d="M5 2V72L17 60l10 24 12-5-10-24h17z" fill="#050505" stroke="#f4f6fa" strokeWidth="1.500" />
        <path d="M14 70l12 24 12-6-8-18" fill="none" stroke="#8fa6c8" strokeWidth="3" />
      </Cursor>
    </Page>
  );
}
